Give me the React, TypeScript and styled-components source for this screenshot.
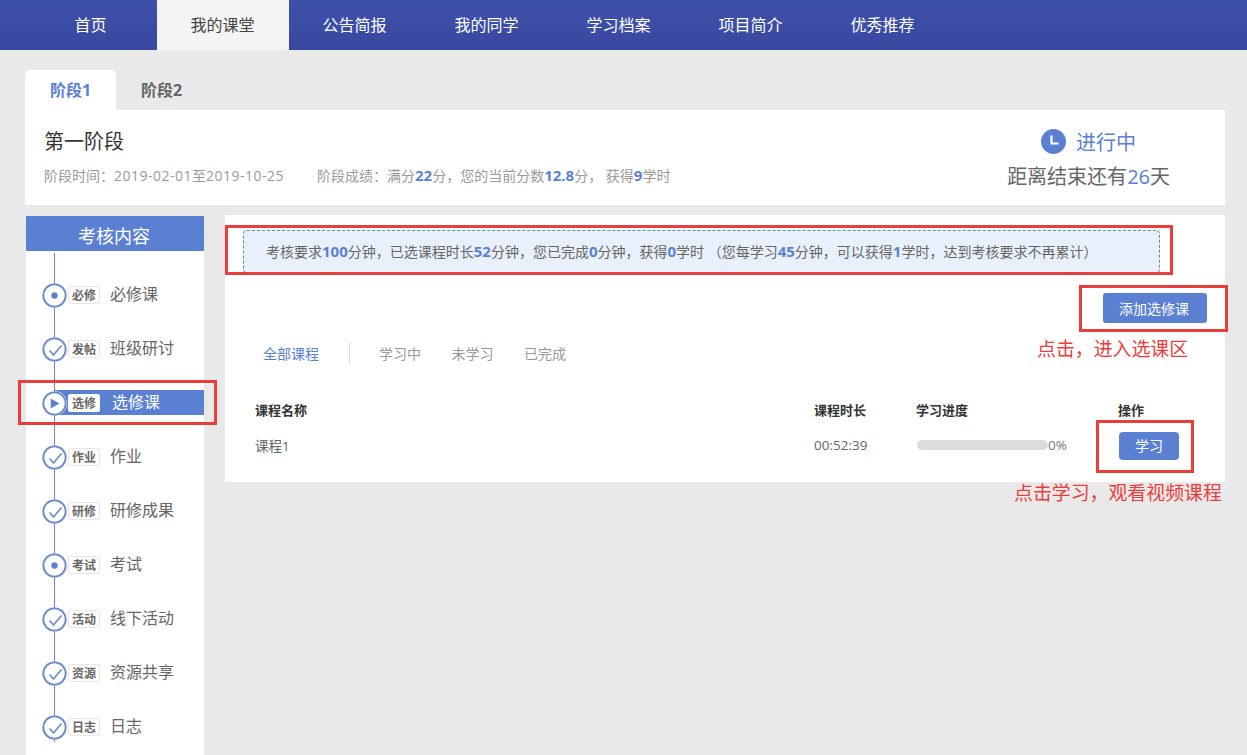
import styled, { createGlobalStyle } from "styled-components";

const BLUE = "#5b80d2";
const RED = "#e83e3e";

const GlobalStyle = createGlobalStyle`
  html, body {
    margin: 0;
    padding: 0;
    height: 100%;
    overflow: hidden;
    background: #e8e9e8;
    font-family: "Open Sans", "Noto Sans CJK SC", sans-serif;
  }
  * { box-sizing: border-box; }
`;

const Page = styled.div`
  position: relative;
  width: 1247px;
  height: 755px;
  overflow: hidden;
`;

const Nav = styled.nav`
  height: 50px;
  padding-left: 25px;
  display: flex;
  background: linear-gradient(#3e52a9, #39479f);
`;
const NavItem = styled.a<{ $active?: boolean }>`
  width: 132px;
  padding: 0 1px 2px 0;
  display: flex;
  align-items: center;
  justify-content: center;
  font-size: 16px;
  color: ${(p) => (p.$active ? "#444" : "#fff")};
  background: ${(p) => (p.$active ? "#f4f4f4" : "transparent")};
`;

const Content = styled.main`
  padding: 20px 22px 0 25px;
`;

const Tabs = styled.div`
  height: 40px;
  display: flex;
`;
const Tab = styled.div<{ $active?: boolean }>`
  width: 91px;
  padding-bottom: 2px;
  display: flex;
  align-items: center;
  justify-content: center;
  font-size: 16px;
  font-weight: 700;
  border-radius: 5px 5px 0 0;
  color: ${(p) => (p.$active ? BLUE : "#666")};
  background: ${(p) => (p.$active ? "#fff" : "transparent")};
`;

const StagePanel = styled.section`
  height: 95px;
  background: #fff;
  display: flex;
  justify-content: space-between;
  padding: 16px 55px 0 19px;
`;
const StageTitle = styled.h2`
  margin: 1px 0 0;
  font-size: 20px;
  font-weight: 400;
  line-height: 30px;
  color: #333;
`;
const StageMeta = styled.div`
  margin-top: 8px;
  display: flex;
  align-items: center;
  height: 20px;
  color: #999;
`;
const StageDate = styled.span`
  font-size: 14px;
  width: 273px;
`;
const DateValue = styled.span`
  letter-spacing: 0.5px;
`;
const StageScore = styled.span`
  font-size: 14px;
  b {
    color: ${BLUE};
    font-size: 15px;
  }
`;
const StatusBox = styled.div`
  display: flex;
  flex-direction: column;
  align-items: center;
`;
const StatusLine = styled.div`
  height: 30px;
  display: flex;
  align-items: center;
  gap: 10px;
  font-size: 20px;
  color: ${BLUE};
`;
const Countdown = styled.div`
  margin-top: 6px;
  font-size: 20px;
  line-height: 30px;
  color: #666;
  em {
    font-style: normal;
    color: ${BLUE};
  }
`;

const Columns = styled.div`
  margin-top: 10px;
  display: flex;
  align-items: flex-start;
  gap: 21px;
`;

const Sidebar = styled.aside`
  margin: 1px 0 0 1px;
  width: 178px;
  height: 560px;
  background: #fff;
`;
const SidebarTitle = styled.div`
  height: 35px;
  background: ${BLUE};
  color: #fff;
  font-size: 18px;
  text-align: center;
  padding-right: 2px;
  line-height: 40px;
`;
const StepList = styled.ul`
  position: relative;
  list-style: none;
  margin: 0;
  padding: 17px 0 0;
  &::before {
    content: "";
    position: absolute;
    left: 28px;
    top: 2px;
    height: 489px;
    width: 1px;
    background: #6f84c6;
  }
`;
const Step = styled.li<{ $active?: boolean }>`
  position: relative;
  height: 54px;
  display: flex;
  align-items: center;
  padding-left: 16px;
  &::before {
    content: "";
    display: ${(p) => (p.$active ? "block" : "none")};
    position: absolute;
    left: 29px;
    right: 0;
    top: 14px;
    height: 25px;
    background: ${BLUE};
  }
`;
const StepIcon = styled.svg`
  position: relative;
  width: 25px;
  height: 25px;
  flex: none;
  background: #fff;
  border-radius: 50%;
`;
const Badge = styled.span<{ $active?: boolean }>`
  position: relative;
  margin-left: 1px;
  width: 32px;
  height: 18px;
  flex: none;
  padding-bottom: 1px;
  display: flex;
  align-items: center;
  justify-content: center;
  border: 1px solid ${(p) => (p.$active ? "#fff" : "#e6e6e6")};
  border-radius: 2px;
  background: #fff;
  font-size: 12px;
  font-weight: 700;
  color: #666;
`;
const StepLabel = styled.span<{ $active?: boolean }>`
  position: relative;
  margin: 0 0 5px ${(p) => (p.$active ? "12px" : "10px")};
  font-size: 16px;
  color: ${(p) => (p.$active ? "#fff" : "#666")};
`;

const MainCard = styled.section`
  width: 1000px;
  height: 267px;
  background: #fff;
  padding: 15px 18px 0;
`;
const Notice = styled.div`
  width: 917px;
  height: 43px;
  padding: 0 0 2px 22px;
  display: flex;
  align-items: center;
  background: #e8f0fc;
  border: 1px dashed #5f8a9a;
  border-radius: 4px;
  font-size: 14px;
  color: #666;
  white-space: pre;
  b {
    font-size: 15px;
    color: ${BLUE};
  }
`;
const ActionRow = styled.div`
  margin-top: 20px;
  display: flex;
  justify-content: flex-end;
`;
const AddButton = styled.button`
  width: 104px;
  height: 30px;
  padding: 0 2px 1px 0;
  border: 0;
  border-radius: 3px;
  background: ${BLUE};
  color: #fff;
  font: inherit;
  font-size: 14px;
`;
const Filters = styled.div`
  margin-top: 19px;
  padding-left: 20px;
  height: 21px;
  display: flex;
  align-items: center;
  font-size: 14px;
  color: #999;
`;
const Filter = styled.span<{ $active?: boolean }>`
  width: ${(p) => (p.$active ? "auto" : "72.5px")};
  flex: none;
  color: ${(p) => (p.$active ? BLUE : "#999")};
`;
const FilterDivider = styled.i`
  width: 1px;
  height: 21px;
  background: #ddd;
  margin: 0 29px 0 30px;
`;
const TableHead = styled.div`
  margin-top: 36px;
  height: 20px;
  display: grid;
  grid-template-columns: 559px 102px 202px 1fr;
  align-items: center;
  padding-left: 12px;
  font-size: 13px;
  font-weight: 700;
  color: #333;
`;
const TableRow = styled.div`
  margin-top: 11px;
  height: 30px;
  display: grid;
  grid-template-columns: 559px 103px 202px 1fr;
  align-items: center;
  padding-left: 12px;
  font-size: 13.5px;
  color: #666;
`;
const ProgressCell = styled.div`
  display: flex;
  align-items: center;
  color: #777;
`;
const ProgressTrack = styled.div`
  width: 131px;
  height: 10px;
  border-radius: 5px;
  background: #dcdcdc;
`;
const ActionCell = styled.div`
  display: flex;
  padding-top: 1px;
`;
const StudyButton = styled.button`
  width: 60px;
  height: 28px;
  padding: 0 0 2px;
  border: 0;
  border-radius: 4px;
  background: ${BLUE};
  color: #fff;
  font: inherit;
  font-size: 14px;
`;

const RedBox = styled.div<{ $x: number; $y: number; $w: number; $h: number }>`
  position: absolute;
  left: ${(p) => p.$x}px;
  top: ${(p) => p.$y}px;
  width: ${(p) => p.$w}px;
  height: ${(p) => p.$h}px;
  border: 3px solid ${RED};
  pointer-events: none;
`;
const RedNote = styled.div<{ $x: number; $y: number }>`
  position: absolute;
  left: ${(p) => p.$x}px;
  top: ${(p) => p.$y}px;
  font-family: "Liberation Serif", "Noto Sans CJK SC", serif;
  font-size: 18.9px;
  line-height: 24px;
  color: ${RED};
  white-space: nowrap;
`;

type StepKind = "dot" | "check" | "play";

function StepGlyph({ kind }: { kind: StepKind }) {
  return (
    <StepIcon viewBox="0 0 25 25">
      <circle cx="12.5" cy="12.5" r="11.2" fill="#fff" stroke="#6f8ccb" strokeWidth="2" />
      {kind === "dot" && <circle cx="12.5" cy="12.5" r="3.2" fill="#5f80cf" />}
      {kind === "check" && (
        <polyline points="7.5,13.5 11.5,18 19.5,8.5" fill="none" stroke="#6f8ccb" strokeWidth="1.7" />
      )}
      {kind === "play" && <polygon points="8.7,7.5 8.7,17.5 17.5,12.5" fill="#5f80cf" />}
    </StepIcon>
  );
}

const navItems = ["首页", "我的课堂", "公告简报", "我的同学", "学习档案", "项目简介", "优秀推荐"];

const steps: { badge: string; label: string; kind: StepKind; active?: boolean }[] = [
  { badge: "必修", label: "必修课", kind: "dot" },
  { badge: "发帖", label: "班级研讨", kind: "check" },
  { badge: "选修", label: "选修课", kind: "play", active: true },
  { badge: "作业", label: "作业", kind: "check" },
  { badge: "研修", label: "研修成果", kind: "check" },
  { badge: "考试", label: "考试", kind: "dot" },
  { badge: "活动", label: "线下活动", kind: "check" },
  { badge: "资源", label: "资源共享", kind: "check" },
  { badge: "日志", label: "日志", kind: "check" },
];

export default function App() {
  return (
    <Page>
      <GlobalStyle />
      <Nav>
        {navItems.map((item) => (
          <NavItem key={item} $active={item === "我的课堂"}>
            {item}
          </NavItem>
        ))}
      </Nav>
      <Content>
        <Tabs>
          <Tab $active>阶段1</Tab>
          <Tab>阶段2</Tab>
        </Tabs>
        <StagePanel>
          <div>
            <StageTitle>第一阶段</StageTitle>
            <StageMeta>
              <StageDate>
                阶段时间：<DateValue>2019-02-01</DateValue>至<DateValue>2019-10-25</DateValue>
              </StageDate>
              <StageScore>
                阶段成绩：满分<b>22</b>分，您的当前分数<b>12.8</b>分， 获得<b>9</b>学时
              </StageScore>
            </StageMeta>
          </div>
          <StatusBox>
            <StatusLine>
              <svg width="25" height="25" viewBox="0 0 25 25">
                <circle cx="12.5" cy="12.5" r="12.5" fill={BLUE} />
                <polyline points="10.5,6.5 10.5,14.5 17.5,14.5" fill="none" stroke="#fff" strokeWidth="2.2" />
              </svg>
              进行中
            </StatusLine>
            <Countdown>
              距离结束还有<em>26</em>天
            </Countdown>
          </StatusBox>
        </StagePanel>
        <Columns>
          <Sidebar>
            <SidebarTitle>考核内容</SidebarTitle>
            <StepList>
              {steps.map((step) => (
                <Step key={step.badge} $active={step.active}>
                  <StepGlyph kind={step.kind} />
                  <Badge $active={step.active}>{step.badge}</Badge>
                  <StepLabel $active={step.active}>{step.label}</StepLabel>
                </Step>
              ))}
            </StepList>
          </Sidebar>
          <MainCard>
            <Notice>
              考核要求<b>100</b>分钟，已选课程时长<b>52</b>分钟，您已完成<b>0</b>分钟，获得<b>0</b>学时 （您每学习<b>45</b>分钟，可以获得<b>1</b>学时，达到考核要求不再累计）
            </Notice>
            <ActionRow>
              <AddButton>添加选修课</AddButton>
            </ActionRow>
            <Filters>
              <Filter $active>全部课程</Filter>
              <FilterDivider />
              <Filter>学习中</Filter>
              <Filter>未学习</Filter>
              <Filter>已完成</Filter>
            </Filters>
            <TableHead>
              <span>课程名称</span>
              <span>课程时长</span>
              <span>学习进度</span>
              <span>操作</span>
            </TableHead>
            <TableRow>
              <span>课程1</span>
              <span>00:52:39</span>
              <ProgressCell>
                <ProgressTrack />
                0%
              </ProgressCell>
              <ActionCell>
                <StudyButton>学习</StudyButton>
              </ActionCell>
            </TableRow>
          </MainCard>
        </Columns>
      </Content>
      <RedBox $x={225} $y={225} $w={948} $h={50} />
      <RedBox $x={1079} $y={285} $w={149} $h={47} />
      <RedBox $x={1096} $y={420} $w={98} $h={53} />
      <RedBox $x={18} $y={380} $w={199} $h={45} />
      <RedNote $x={1037} $y={338}>点击，进入选课区</RedNote>
      <RedNote $x={1014} $y={482}>点击学习，观看视频课程</RedNote>
    </Page>
  );
}
